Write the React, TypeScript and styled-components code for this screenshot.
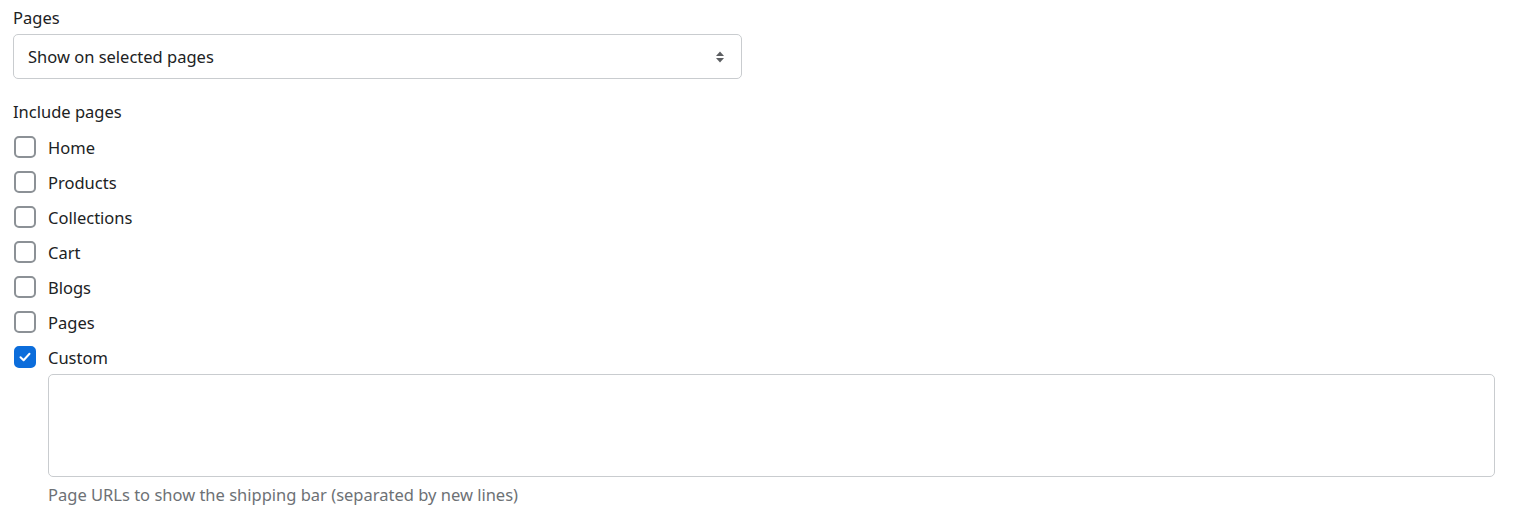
import styled, { createGlobalStyle } from "styled-components";

const GlobalStyle = createGlobalStyle`
  body {
    margin: 0;
    background: #ffffff;
    font-family: "Noto Sans", "Open Sans", sans-serif;
    color: #202223;
  }
`;

const SForm = styled.div`
  padding: 8px 20px 0 13px;
  display: flex;
  flex-direction: column;
  font-size: 16.5px;
`;

const SLabel = styled.div`
  line-height: 20px;
  margin-bottom: 6px;
`;

const SSelect = styled.div`
  width: 729px;
  height: 45px;
  box-sizing: border-box;
  border: 1px solid #c9cccf;
  border-radius: 5px;
  display: flex;
  align-items: center;
  justify-content: space-between;
  padding: 0 16px 0 14px;
  margin-bottom: 23px;
`;

const SCheckList = styled.div`
  display: flex;
  flex-direction: column;
  gap: 13px;
  margin-top: 8px;
`;

const SRow = styled.label`
  display: flex;
  align-items: center;
  gap: 12px;
  height: 22px;
  padding-left: 1px;
`;

const SBox = styled.span<{ $checked?: boolean }>`
  width: 22px;
  height: 22px;
  box-sizing: border-box;
  border-radius: 5px;
  border: 2px solid ${(p) => (p.$checked ? "#0c6ddb" : "#8c9196")};
  background: ${(p) => (p.$checked ? "#0c6ddb" : "#fff")};
  display: flex;
  align-items: center;
  justify-content: center;
  flex-shrink: 0;
`;

const SCustom = styled.div`
  padding-left: 35px;
  margin-top: 6px;
  display: flex;
  flex-direction: column;
`;

const STextArea = styled.div`
  height: 103px;
  box-sizing: border-box;
  border: 1px solid #c9cccf;
  border-radius: 5px;
`;

const SHelp = styled.div`
  margin-top: 6px;
  color: #6d7175;
`;

const pages = ["Home", "Products", "Collections", "Cart", "Blogs", "Pages"];

const Arrows = () => (
  <svg width="10" height="14" viewBox="0 0 10 14">
    <path d="M1 6 L5 1.5 L9 6 Z" fill="#5c5f62" />
    <path d="M1 8 L5 12.5 L9 8 Z" fill="#5c5f62" />
  </svg>
);

const Check = () => (
  <svg width="14" height="14" viewBox="0 0 14 14">
    <path d="M2.5 7.2 L5.6 10.2 L11.5 3.8" fill="none" stroke="#fff" strokeWidth="2" strokeLinecap="round" strokeLinejoin="round" />
  </svg>
);

const App = () => {
  return (
    <>
      <GlobalStyle />
      <SForm>
        <SLabel>Pages</SLabel>
        <SSelect>
          <span>Show on selected pages</span>
          <Arrows />
        </SSelect>
        <SLabel>Include pages</SLabel>
        <SCheckList>
          {pages.map((p) => (
            <SRow key={p}>
              <SBox />
              {p}
            </SRow>
          ))}
          <SRow>
            <SBox $checked>
              <Check />
            </SBox>
            Custom
          </SRow>
        </SCheckList>
        <SCustom>
          <STextArea />
          <SHelp>Page URLs to show the shipping bar (separated by new lines)</SHelp>
        </SCustom>
      </SForm>
    </>
  );
};
export default App;
